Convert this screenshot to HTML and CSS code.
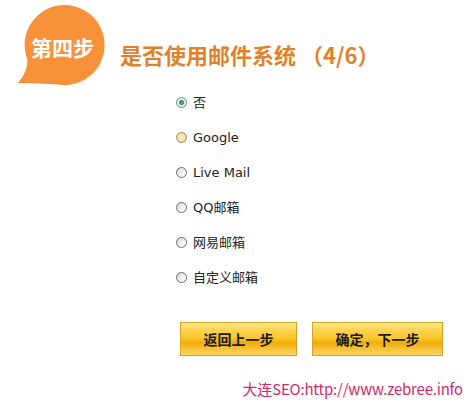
FILE: index.html
```html
<!DOCTYPE html>
<html lang="zh">
<head>
<meta charset="utf-8">
<link rel="stylesheet" href="styles.css">
</head>
<body>
<div class="page">
  <div class="header">
    <div class="badge">
      <svg class="bubble" width="112" height="88" viewBox="0 0 112 88">
        <path d="M18 83 C24 76 27 69 27.5 60 A40 40 0 1 1 58 84.5 C46 84 30 83 18 83 Z" fill="#f7923a"/>
      </svg>
      <span class="badge-text">第四步</span>
    </div>
    <h1 class="title">是否使用邮件系统 （4/6）</h1>
  </div>
  <ul class="options">
    <li class="option"><span class="radio checked"></span><span class="label">否</span></li>
    <li class="option"><span class="radio hover"></span><span class="label">Google</span></li>
    <li class="option"><span class="radio"></span><span class="label">Live Mail</span></li>
    <li class="option"><span class="radio"></span><span class="label">QQ邮箱</span></li>
    <li class="option"><span class="radio"></span><span class="label">网易邮箱</span></li>
    <li class="option"><span class="radio"></span><span class="label">自定义邮箱</span></li>
  </ul>
  <div class="buttons">
    <button class="btn btn-back">返回上一步</button>
    <button class="btn btn-next">确定，下一步</button>
  </div>
  <div class="footer">大连SEO:http://www.zebree.info</div>
</div>
</body>
</html>
```
FILE: styles.css
```css
html, body {
  margin: 0;
  padding: 0;
  background: #ffffff;
}
.page {
  width: 471px;
  height: 405px;
  overflow: hidden;
  font-family: "DejaVu Sans", "Noto Sans CJK SC", sans-serif;
}
.header {
  height: 85px;
  display: flex;
  align-items: flex-start;
}
.badge {
  position: relative;
  width: 112px;
  height: 85px;
  flex: none;
}
.bubble {
  position: absolute;
  left: 0;
  top: 0;
  overflow: visible;
}
.badge-text {
  position: absolute;
  left: 31px;
  top: 33px;
  font-family: "Noto Sans CJK SC", sans-serif;
  font-weight: bold;
  font-size: 21px;
  line-height: 28px;
  color: #ffffff;
}
.title {
  margin: 39px 0 0 8px;
  font-family: "Noto Sans CJK SC", sans-serif;
  font-weight: bold;
  font-size: 22px;
  line-height: 30px;
  color: #e0822a;
  white-space: nowrap;
}
.options {
  list-style: none;
  margin: 0;
  padding: 0 0 0 176px;
}
.option {
  height: 35px;
  display: flex;
  align-items: center;
}
.radio {
  width: 11px;
  height: 11px;
  box-sizing: border-box;
  border-radius: 50%;
  border: 1px solid #5f6f7c;
  background: linear-gradient(135deg, #d8d8d8 0%, #f4f4f4 60%, #ffffff 100%);
  margin-right: 6px;
  flex: none;
}
.radio.checked {
  border-color: #6b8a92;
  background: radial-gradient(circle at 50% 50%, #4aa86a 0, #3a9a5a 2.2px, #e2ece6 2.8px, #f6f8f6 100%);
}
.radio.hover {
  border-color: #a58a5a;
  background: radial-gradient(circle at 50% 50%, #fff3d6 0, #f7dba0 60%, #e8b860 100%);
}
.label {
  font-size: 13px;
  line-height: 16px;
  color: #222222;
}
.buttons {
  display: flex;
  gap: 15px;
  margin: 27px 0 0 180px;
}
.btn {
  height: 34px;
  box-sizing: border-box;
  border: 1px solid #d6a322;
  padding: 0;
  font-family: "Noto Sans CJK SC", sans-serif;
  font-weight: bold;
  font-size: 14px;
  color: #1a1a1a;
  background: linear-gradient(to bottom, #fde68c 0%, #fcd450 22%, #f9c52a 48%, #f1ab06 62%, #f7c33a 80%, #fbd35c 100%);
}
.btn-back {
  width: 117px;
}
.btn-next {
  width: 131px;
}
.footer {
  margin-top: 23px;
  padding-right: 8px;
  text-align: right;
  font-family: "Noto Sans CJK SC", sans-serif;
  font-size: 15px;
  line-height: 20px;
  color: #d42a6a;
  letter-spacing: -0.2px;
}
```
